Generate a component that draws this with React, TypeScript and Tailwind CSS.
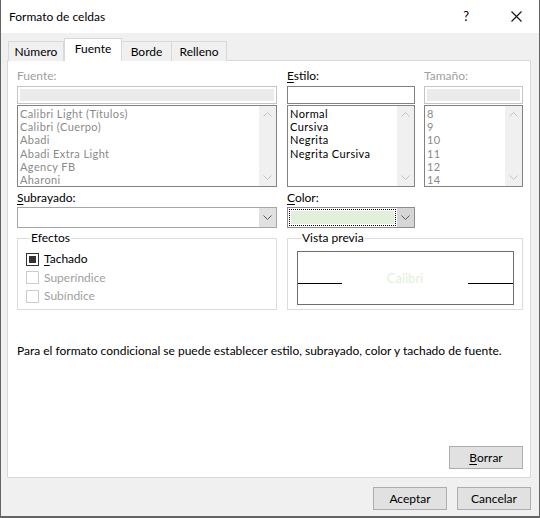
import React from 'react';

const font = { fontFamily: 'Lato, "Noto Sans", sans-serif' };

const fonts = ['Calibri Light (Títulos)', 'Calibri (Cuerpo)', 'Abadi', 'Abadi Extra Light', 'Agency FB', 'Aharoni'];
const styles = ['Normal', 'Cursiva', 'Negrita', 'Negrita Cursiva'];
const sizes = ['8', '9', '10', '11', '12', '14'];

const Chevron = ({ up, color }: { up?: boolean; color: string }) => (
  <svg width="9" height="5" viewBox="0 0 9 5">
    <path d={up ? 'M0.5 4.5 L4.5 0.5 L8.5 4.5' : 'M0.5 0.5 L4.5 4.5 L8.5 0.5'} fill="none" stroke={color} strokeWidth="1" />
  </svg>
);

// listbox with a disabled scrollbar on the right
const ListBox = ({ items, dim }: { items: string[]; dim?: boolean }) => (
  <div className="mt-[1px] flex h-[82px] border border-[#828282] bg-white">
    <div className={`flex-1 pl-[2px] pt-[1px] text-[11px] leading-[13.2px] tracking-[0.4px] ${dim ? 'text-[#8a8a8a]' : 'text-black'}`}>
      {items.map((it) => (
        <div key={it}>{it}</div>
      ))}
    </div>
    <div className="flex w-[17px] flex-col items-center justify-between bg-[#f0f0f0] py-[6px]">
      <Chevron up color="#c3c3c3" />
      <Chevron color="#c3c3c3" />
    </div>
  </div>
);

const Btn = ({ children }: { children: React.ReactNode }) => (
  <button className="h-[23px] w-[74px] border border-[#adadad] bg-[#e1e1e1] text-[12px] text-black">{children}</button>
);

const Check = ({ label, checked, disabled }: { label: React.ReactNode; checked?: boolean; disabled?: boolean }) => (
  <div className="flex h-[18.5px] items-center">
    <div className={`flex h-[13px] w-[13px] items-center justify-center border ${disabled ? 'border-[#cccccc]' : 'border-[#333333]'}`}>
      {checked && <div className="h-[7px] w-[7px] bg-[#333333]" />}
    </div>
    <span className={`ml-[5px] text-[12px] ${disabled ? 'text-[#a0a0a0]' : 'text-black'}`}>{label}</span>
  </div>
);

const App: React.FC = () => {
  return (
    <div className="flex h-[518px] w-[540px] flex-col border-x border-b-2 border-[#646464] bg-[#f0f0f0]" style={font}>
      {/* title bar */}
      <div className="flex h-[33px] items-center bg-white pl-[8px] pr-[17px] text-[12px] text-black">
        <span>Formato de celdas</span>
        <span className="ml-auto mr-[42px] text-[13px]">?</span>
        <svg width="11" height="11" viewBox="0 0 11 11">
          <path d="M0.5 0.5 L10.5 10.5 M10.5 0.5 L0.5 10.5" stroke="#111" strokeWidth="1.1" />
        </svg>
      </div>

      <div className="flex flex-1 flex-col pl-[6px] pr-[8px]">
        {/* tabs */}
        <div className="relative z-10 -mb-px mt-[5px] flex h-[23px] items-end pl-[1px] text-[12px]">
          <div className="flex h-[20px] w-[56px] items-center justify-center border border-b-0 border-[#d9d9d9] bg-[#f0f0f0]">Número</div>
          <div className="flex h-[23px] w-[58px] items-center justify-center border border-b-0 border-[#d9d9d9] bg-white pb-[2px]">Fuente</div>
          <div className="flex h-[20px] w-[50px] items-center justify-center border border-b-0 border-l-0 border-[#d9d9d9] bg-[#f0f0f0]">Borde</div>
          <div className="flex h-[20px] w-[55px] items-center justify-center border border-b-0 border-l-0 border-[#d9d9d9] bg-[#f0f0f0]">Relleno</div>
        </div>

        {/* panel */}
        <div className="flex h-[418px] flex-col border border-[#d9d9d9] bg-white pb-[8px] pl-[9px] pr-[7px] pt-[6px]">
          <div className="flex">
            <div className="w-[260px]">
              <div className="h-[17px] text-[12px] leading-[17px] text-[#a0a0a0]">Fuente:</div>
              <div className="mt-[2px] h-[18px] border border-[#c4c4c4] p-[2px]">
                <div className="h-full bg-[#ebebeb]" />
              </div>
              <ListBox items={fonts} dim />
            </div>
            <div className="ml-[10px] w-[128px]">
              <div className="h-[17px] text-[12px] leading-[17px] text-black">
                <span className="underline underline-offset-2">E</span>stilo:
              </div>
              <div className="mt-[2px] h-[18px] border border-[#828282] bg-white" />
              <ListBox items={styles} />
            </div>
            <div className="ml-[9px] w-[99px]">
              <div className="h-[17px] text-[12px] leading-[17px] text-[#a0a0a0]">Tamaño:</div>
              <div className="mt-[2px] h-[18px] border border-[#c4c4c4] p-[2px]">
                <div className="h-full bg-[#ebebeb]" />
              </div>
              <ListBox items={sizes} dim />
            </div>
          </div>

          <div className="mt-[2px] flex">
            <div className="w-[260px]">
              <div className="h-[17px] text-[12px] leading-[17px] text-black">
                <span className="underline underline-offset-2">S</span>ubrayado:
              </div>
              <div className="mt-[1px] flex h-[21px] border border-[#a6a6a6] bg-white">
                <div className="flex-1" />
                <div className="flex w-[17px] items-center justify-center bg-[#e1e1e1]">
                  <Chevron color="#5a5a5a" />
                </div>
              </div>
            </div>
            <div className="ml-[10px] w-[128px]">
              <div className="h-[17px] text-[12px] leading-[17px] text-black">
                <span className="underline underline-offset-2">C</span>olor:
              </div>
              <div className="mt-[1px] flex h-[21px] border border-[#8c8c8c] bg-white">
                <div className="flex-1 p-[1px]">
                  <div className="h-full border border-dotted border-black p-[1px]">
                    <div className="h-full bg-[#e2efda]" />
                  </div>
                </div>
                <div className="flex w-[17px] items-center justify-center bg-[#d6d6d6]">
                  <Chevron color="#5a5a5a" />
                </div>
              </div>
            </div>
          </div>

          <div className="mt-[2px] flex">
            <fieldset className="h-[80px] w-[260px] border border-[#dcdcdc] pl-[8px]">
              <legend className="ml-[4px] px-[1px] text-[12px] leading-[16px] text-black">Efectos</legend>
              <div className="mt-[4px]">
                <Check
                  checked
                  label={
                    <>
                      <span className="underline underline-offset-2">T</span>achado
                    </>
                  }
                />
                <Check disabled label="Superíndice" />
                <Check disabled label="Subíndice" />
              </div>
            </fieldset>
            <fieldset className="ml-[10px] h-[80px] w-[236px] border border-[#dcdcdc] pl-[9px] pr-[8px]">
              <legend className="ml-[4px] px-[1px] text-[12px] leading-[16px] text-black">Vista previa</legend>
              <div className="mt-[5px] flex h-[54px] items-start border border-[#6e6e6e]">
                <div className="mt-[31px] h-[1px] w-[44px] bg-black" />
                <div className="mt-[18px] flex-1 text-center text-[13px] leading-[16px] text-[#e2efda]">Calibri</div>
                <div className="mt-[31px] h-[1px] w-[45px] bg-black" />
              </div>
            </fieldset>
          </div>

          <p className="mt-[33px] text-[12px] leading-[16px] text-black">
            Para el formato condicional se puede establecer estilo, subrayado, color y tachado de fuente.
          </p>

          <div className="mt-auto flex justify-end">
            <Btn>
              <span className="underline underline-offset-2">B</span>orrar
            </Btn>
          </div>
        </div>

        {/* footer */}
        <div className="mt-[9px] flex justify-end gap-[10px]">
          <Btn>Aceptar</Btn>
          <Btn>Cancelar</Btn>
        </div>
      </div>
    </div>
  );
};

export default App;
